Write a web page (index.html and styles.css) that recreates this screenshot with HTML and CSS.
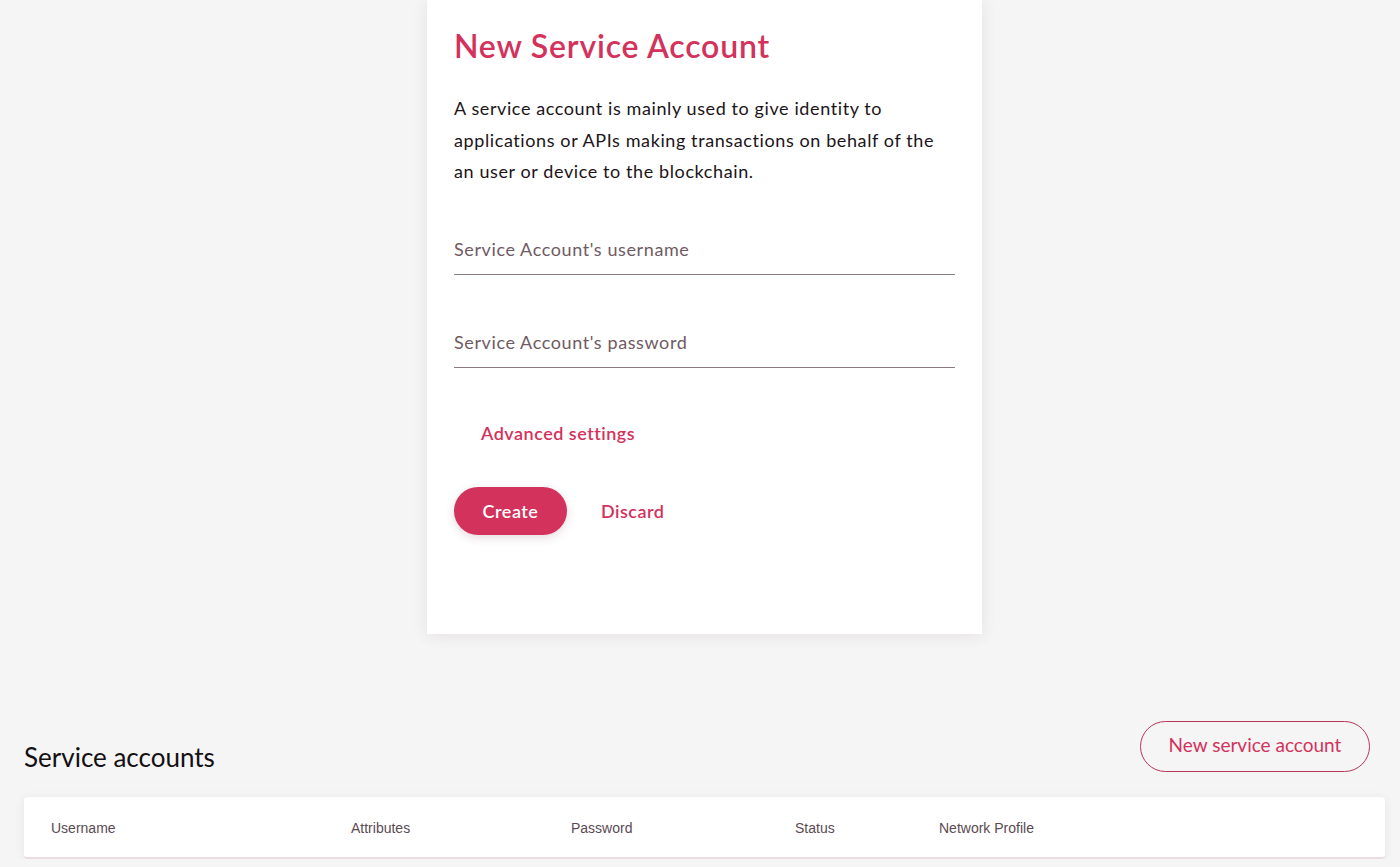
FILE: index.html
```html
<!DOCTYPE html>
<html lang="en">
<head>
<meta charset="utf-8">
<title>Service accounts</title>
<link rel="stylesheet" href="styles.css">
</head>
<body>
<main class="page">
  <div class="card-wrap">
    <section class="card">
      <h1 class="card-title">New Service Account</h1>
      <p class="card-text">A service account is mainly used to give identity to applications or APIs making transactions on behalf of the an user or device to the blockchain.</p>
      <div class="field"><input class="input" type="text" placeholder="Service Account's username"></div>
      <div class="field"><input class="input" type="password" placeholder="Service Account's password"></div>
      <a class="advanced" href="#">Advanced settings</a>
      <div class="actions">
        <button class="btn-primary" type="button">Create</button>
        <button class="btn-link" type="button">Discard</button>
      </div>
    </section>
  </div>

  <section class="accounts">
    <div class="accounts-head">
      <h2 class="accounts-title">Service accounts</h2>
      <button class="btn-outline" type="button">New service account</button>
    </div>
    <div class="table">
      <div class="table-row">
        <span class="col col-user">Username</span>
        <span class="col col-attr">Attributes</span>
        <span class="col col-pass">Password</span>
        <span class="col col-status">Status</span>
        <span class="col col-net">Network Profile</span>
      </div>
    </div>
  </section>
</main>
</body>
</html>
```

FILE: styles.css
```css
* { box-sizing: border-box; }

html, body {
  margin: 0;
  padding: 0;
  background: #f5f5f5;
  font-family: "Lato", "Noto Sans", sans-serif;
  color: #1c1418;
}

.page {
  display: flex;
  flex-direction: column;
}

.card-wrap {
  display: flex;
  justify-content: center;
  padding-left: 9px;
}

.card {
  width: 555px;
  height: 634px;
  background: #fff;
  padding: 24px 27px 0 27px;
  box-shadow: 0 2px 14px rgba(120, 90, 100, 0.12);
  display: flex;
  flex-direction: column;
}

.card-title {
  margin: 0;
  font-size: 32px;
  line-height: 44px;
  font-weight: 600;
  color: #d3325c;
  letter-spacing: 0.8px;
}

.card-text {
  margin: 25px 0 0 0;
  max-width: 492px;
  font-size: 18px;
  line-height: 31.5px;
  letter-spacing: 0.6px;
  color: #1c1418;
}

.field {
  margin-top: 48px;
}
.field + .field {
  margin-top: 54px;
}

.input {
  display: block;
  width: 100%;
  border: none;
  border-bottom: 1px solid #8c7a82;
  background: transparent;
  font-family: inherit;
  font-size: 18px;
  letter-spacing: 0.6px;
  padding: 0 0 12px 0;
  line-height: 26px;
  outline: none;
  color: #1c1418;
}
.input::placeholder {
  color: #6f5a63;
}

.advanced {
  margin-top: 53px;
  margin-left: 27px;
  font-size: 18px;
  font-weight: 600;
  letter-spacing: 0.5px;
  color: #d3325c;
  text-decoration: none;
  line-height: 24px;
  align-self: flex-start;
}

.actions {
  margin-top: 42px;
  display: flex;
  align-items: center;
  gap: 34px;
}

.btn-primary {
  width: 113px;
  height: 48px;
  border: none;
  border-radius: 24px;
  background: #d3325c;
  color: #fff;
  font-family: inherit;
  font-size: 18px;
  font-weight: 600;
  letter-spacing: 0.5px;
  box-shadow: 0 3px 10px rgba(120, 60, 80, 0.18);
  cursor: pointer;
}

.btn-link {
  border: none;
  background: transparent;
  padding: 0;
  color: #d3325c;
  font-family: inherit;
  font-size: 18px;
  font-weight: 600;
  letter-spacing: 0.5px;
  cursor: pointer;
}

.accounts {
  margin-top: 87px;
  padding: 0 15px 0 24px;
}

.accounts-head {
  display: flex;
  justify-content: space-between;
  align-items: flex-end;
  padding-right: 15px;
}

.accounts-title {
  margin: 0 0 -3px 0;
  font-size: 26px;
  font-weight: 400;
  line-height: 36px;
  color: #141014;
}

.btn-outline {
  width: 230px;
  height: 51px;
  border: 1px solid #b8365a;
  border-radius: 26px;
  background: transparent;
  color: #d3325c;
  font-family: inherit;
  font-size: 19px;
  font-weight: 400;
  padding-bottom: 5px;
  cursor: pointer;
}

.table {
  margin-top: 25px;
  background: #fff;
  border-radius: 4px;
  border-bottom: 2px solid #eadde2;
  box-shadow: 0 1px 8px rgba(120, 90, 100, 0.10);
}

.table-row {
  display: flex;
  height: 60px;
  align-items: center;
  padding-left: 27px;
  padding-top: 2px;
  font-family: "Liberation Sans", Arial, sans-serif;
  font-size: 14px;
  color: #5b4a52;
}

.col-user { width: 300px; }
.col-attr { width: 220px; }
.col-pass { width: 224px; }
.col-status { width: 144px; }
```
